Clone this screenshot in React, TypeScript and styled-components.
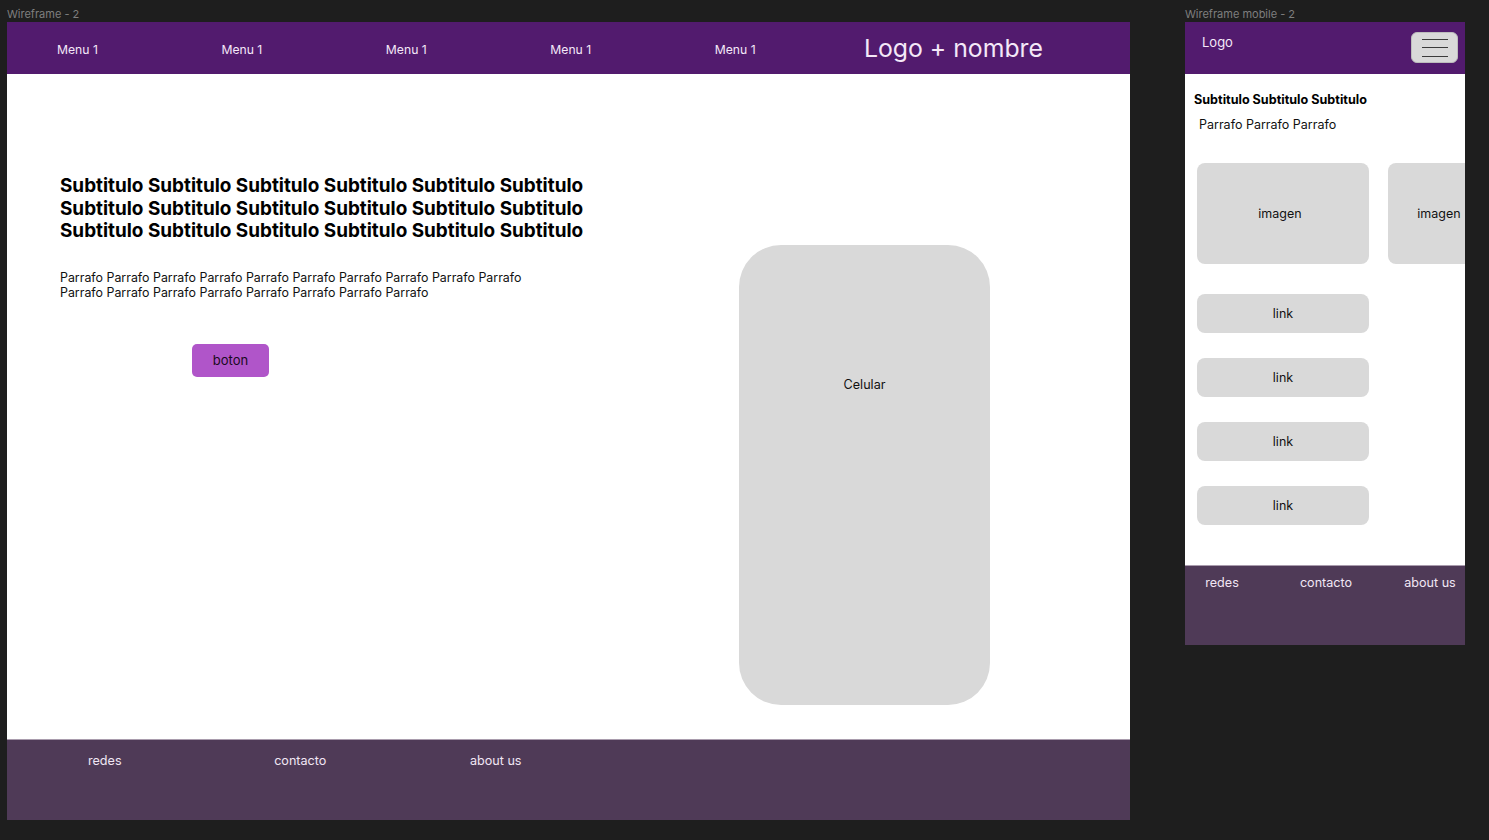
import styled, { createGlobalStyle } from "styled-components";

const GlobalStyle = createGlobalStyle`
  html, body {
    margin: 0;
    padding: 0;
    background: #1e1e1e;
  }
  body {
    font-family: Inter, "Noto Sans", "Liberation Sans", sans-serif;
  }
  * {
    box-sizing: border-box;
  }
`;

const Canvas = styled.div`
  display: flex;
  align-items: flex-start;
  gap: 55px;
  padding-left: 7px;
  width: 1489px;
  height: 840px;
  overflow: hidden;
`;

const FrameColumn = styled.div`
  display: flex;
  flex-direction: column;
`;

const FrameLabel = styled.div`
  height: 22px;
  padding-top: 7px;
  font-size: 11px;
  line-height: 14px;
  color: #7f7f7f;
`;

const Frame = styled.div<{ $width: number; $height: number }>`
  width: ${(p) => p.$width}px;
  height: ${(p) => p.$height}px;
  background: #ffffff;
  display: flex;
  flex-direction: column;
  overflow: hidden;
`;

/* ---------- desktop ---------- */

const Header = styled.header`
  height: 52px;
  flex-shrink: 0;
  background: #521b6e;
  display: flex;
  align-items: center;
  color: #f4e8f8;
`;

const Nav = styled.nav`
  display: flex;
  gap: 123.5px;
  padding-left: 50px;
  padding-top: 4px;
`;

const MenuItem = styled.span`
  font-size: 12.2px;
  line-height: 16px;
  white-space: nowrap;
`;

const Logo = styled.div`
  margin-left: auto;
  margin-right: 87px;
  font-size: 24.8px;
  line-height: 30px;
  white-space: nowrap;
`;

const Main = styled.main`
  flex: 1;
  display: flex;
`;

const Intro = styled.section`
  width: 732px;
  flex-shrink: 0;
  padding: 101px 0 0 53px;
`;

const Headline = styled.h2`
  margin: 0;
  max-width: 580px;
  font-size: 18.9px;
  line-height: 22.5px;
  font-weight: 700;
  color: #000;
`;

const Paragraph = styled.p`
  margin: 27px 0 0;
  max-width: 480px;
  font-size: 12.4px;
  line-height: 15px;
  color: #111;
`;

const Button = styled.button`
  margin: 44px 0 0 132px;
  width: 77px;
  height: 33px;
  border: none;
  border-radius: 5px;
  background: #b055c9;
  font-family: inherit;
  font-size: 13px;
  color: #1a0a20;
`;

const Phone = styled.div`
  margin-top: 171px;
  width: 251px;
  height: 460px;
  border-radius: 42px;
  background: #d9d9d9;
  padding-top: 132px;
  text-align: center;
  font-size: 12.6px;
  line-height: 16px;
  color: #111;
`;

const Footer = styled.footer<{ $height: number }>`
  height: ${(p) => p.$height}px;
  flex-shrink: 0;
  background: #4f3a57;
  border-top: 1px solid #a99cad;
  color: #f1e6f4;
  font-size: 12.6px;
  line-height: 16px;
`;

const FooterLinks = styled.div`
  display: grid;
  grid-template-columns: repeat(3, 195.5px);
  justify-items: center;
  padding-top: 13px;
`;

/* ---------- mobile ---------- */

const MobileHeader = styled.header`
  height: 52px;
  flex-shrink: 0;
  background: #521b6e;
  display: flex;
  justify-content: space-between;
  align-items: flex-start;
  padding: 10px 7px 0 17px;
  color: #f4e8f8;
`;

const MobileLogo = styled.span`
  font-size: 13px;
  line-height: 16px;
  margin-top: 2px;
`;

const Burger = styled.button`
  width: 47px;
  height: 31px;
  border: 1px solid #bdbdbd;
  border-radius: 6px;
  background: #d9d9d9;
  display: flex;
  flex-direction: column;
  align-items: center;
  justify-content: center;
  gap: 7.5px;
  padding: 0;
`;

const BurgerLine = styled.span`
  width: 26px;
  height: 1px;
  background: #3a3a3a;
`;

const MobileMain = styled.main`
  flex: 1;
  padding: 18px 0 0 9px;
`;

const MobileTitle = styled.h3`
  margin: 0;
  font-size: 12.6px;
  line-height: 16px;
  font-weight: 700;
  color: #000;
`;

const MobileText = styled.p`
  margin: 9px 0 0 5px;
  font-size: 12.5px;
  line-height: 16px;
  color: #111;
`;

const Gallery = styled.div`
  display: flex;
  gap: 19px;
  margin: 30px 0 0 3px;
`;

const Tile = styled.div<{ $height: number; $shift?: number }>`
  width: 172px;
  height: ${(p) => p.$height}px;
  flex-shrink: 0;
  border-radius: 8px;
  background: #d9d9d9;
  display: flex;
  align-items: center;
  justify-content: center;
  padding-right: ${(p) => p.$shift ?? 0}px;
  font-size: 12.5px;
  color: #111;
`;

const LinkList = styled.div`
  display: flex;
  flex-direction: column;
  gap: 25px;
  margin: 30px 0 0 3px;
`;

const MobileFooterLinks = styled.div`
  display: grid;
  grid-template-columns: 74px 104px 74px;
  column-gap: 15px;
  justify-items: center;
  padding-top: 9px;
  white-space: nowrap;
`;

const menus = ["Menu 1", "Menu 1", "Menu 1", "Menu 1", "Menu 1"];
const footerLinks = ["redes", "contacto", "about us"];

export default function App() {
  return (
    <>
      <GlobalStyle />
      <Canvas>
        <FrameColumn>
          <FrameLabel>Wireframe - 2</FrameLabel>
          <Frame $width={1123} $height={798}>
            <Header>
              <Nav>
                {menus.map((m, i) => (
                  <MenuItem key={i}>{m}</MenuItem>
                ))}
              </Nav>
              <Logo>Logo + nombre</Logo>
            </Header>
            <Main>
              <Intro>
                <Headline>
                  Subtitulo Subtitulo Subtitulo Subtitulo Subtitulo Subtitulo
                  Subtitulo Subtitulo Subtitulo Subtitulo Subtitulo Subtitulo
                  Subtitulo Subtitulo Subtitulo Subtitulo Subtitulo Subtitulo
                </Headline>
                <Paragraph>
                  Parrafo Parrafo Parrafo Parrafo Parrafo Parrafo Parrafo Parrafo
                  Parrafo Parrafo Parrafo Parrafo Parrafo Parrafo Parrafo Parrafo
                  Parrafo Parrafo
                </Paragraph>
                <Button>boton</Button>
              </Intro>
              <Phone>Celular</Phone>
            </Main>
            <Footer $height={81}>
              <FooterLinks>
                {footerLinks.map((l) => (
                  <span key={l}>{l}</span>
                ))}
              </FooterLinks>
            </Footer>
          </Frame>
        </FrameColumn>

        <FrameColumn>
          <FrameLabel>Wireframe mobile - 2</FrameLabel>
          <Frame $width={280} $height={623}>
            <MobileHeader>
              <MobileLogo>Logo</MobileLogo>
              <Burger aria-label="menu">
                <BurgerLine />
                <BurgerLine />
                <BurgerLine />
              </Burger>
            </MobileHeader>
            <MobileMain>
              <MobileTitle>Subtitulo Subtitulo Subtitulo</MobileTitle>
              <MobileText>Parrafo Parrafo Parrafo</MobileText>
              <Gallery>
                <Tile $height={101} $shift={6}>imagen</Tile>
                <Tile $height={101} $shift={70}>imagen</Tile>
              </Gallery>
              <LinkList>
                {[0, 1, 2, 3].map((i) => (
                  <Tile key={i} $height={39}>
                    link
                  </Tile>
                ))}
              </LinkList>
            </MobileMain>
            <Footer $height={80}>
              <MobileFooterLinks>
                {footerLinks.map((l) => (
                  <span key={l}>{l}</span>
                ))}
              </MobileFooterLinks>
            </Footer>
          </Frame>
        </FrameColumn>
      </Canvas>
    </>
  );
}
